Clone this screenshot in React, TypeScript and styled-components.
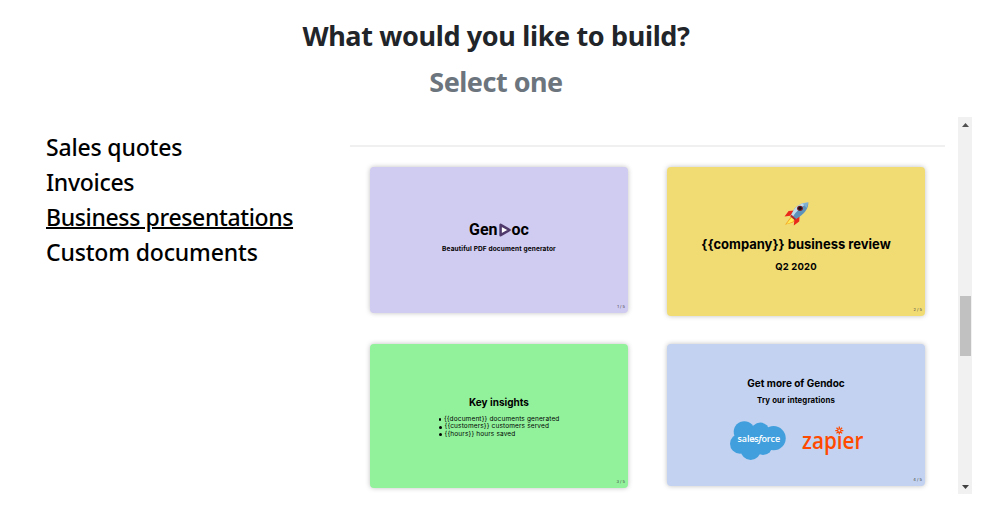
import React from 'react';
import styled, { createGlobalStyle } from 'styled-components';

const GlobalStyle = createGlobalStyle`
  * {
    box-sizing: border-box;
  }

  body {
    background: #fff;
    margin: 0;
    overflow: hidden;
  }
`;

const Page = styled.main`
  color: #212529;
  display: flex;
  flex-direction: column;
  font-family: 'Noto Sans', 'Open Sans', sans-serif;
  height: 515px;
  width: 1000px;
`;

const Header = styled.header`
  height: 117px;
  padding: 19px 8px 0 0;
  text-align: center;
`;

const Title = styled.h1<{ $muted?: boolean; $spacing: string }>`
  color: ${(props) => (props.$muted ? '#6c757d' : '#212529')};
  font-size: 27px;
  font-weight: 700;
  letter-spacing: ${(props) => props.$spacing};
  line-height: 34px;
  margin: 0 0 12px;
  white-space: nowrap;
`;

const Body = styled.div`
  display: flex;
  height: 377px;
`;

const Menu = styled.ul`
  list-style: none;
  margin: 0;
  padding: 13px 0 0 46px;
  width: 350px;
`;

const MenuItem = styled.li<{ $spacing: string }>`
  color: #000;
  font-size: 23px;
  font-weight: 500;
  height: 35px;
  letter-spacing: ${(props) => props.$spacing};
  line-height: 35px;
  white-space: nowrap;
`;

const MenuLabel = styled.span<{ $active: boolean }>`
  text-decoration: ${(props) => (props.$active ? 'underline' : 'none')};
  text-decoration-thickness: 2px;
  text-underline-offset: 1px;
`;

const Templates = styled.section`
  padding-top: 28px;
  width: 595px;
`;

const Divider = styled.hr`
  border: 0;
  border-top: 2px solid #f0f0f0;
  margin: 0 0 20px;
`;

const Slides = styled.div`
  align-items: start;
  display: grid;
  gap: 0 39px;
  grid-template-columns: 258px 258px;
  grid-template-rows: 177px auto;
  padding-left: 20px;
`;

const Slide = styled.article<{ $color: string; $height: number }>`
  align-items: center;
  background: ${(props) => props.$color};
  border-radius: 4px;
  box-shadow: 0 0 5px rgba(0, 0, 0, 0.25);
  color: #000;
  display: flex;
  flex-direction: column;
  font-family: Inter, sans-serif;
  height: ${(props) => props.$height}px;
  position: relative;
  width: 258px;
`;

const SlideText = styled.p<{
  $size: number;
  $top: number;
  $spacing?: string;
}>`
  font-size: ${(props) => props.$size}px;
  font-weight: 700;
  letter-spacing: ${(props) => props.$spacing || 'normal'};
  line-height: 16px;
  margin: ${(props) => props.$top}px 0 0;
  white-space: nowrap;
`;

const PageNumber = styled.span`
  bottom: 4px;
  color: #444;
  font-size: 4px;
  line-height: 5px;
  position: absolute;
  right: 3px;
`;

const Brand = styled.div`
  align-items: center;
  display: flex;
  font-family: Roboto, sans-serif;
  font-size: 16px;
  font-weight: 700;
  line-height: 20px;
  margin-top: 53px;

  svg {
    display: block;
    flex: none;
    margin: 0 1px;
  }
`;

const Rocket = styled.svg`
  display: block;
  margin: 35px 0 0 1px;
`;

const Insights = styled.ul`
  font-size: 6.5px;
  letter-spacing: 0.14px;
  line-height: 7.7px;
  list-style: none;
  margin: 5.5px 0 0;
  padding: 0;
  width: 121px;

  li {
    align-items: center;
    display: flex;
    white-space: nowrap;
  }

  li::before {
    background: #000;
    border-radius: 50%;
    content: '';
    height: 3px;
    margin-right: 3px;
    width: 3px;
  }
`;

const Integrations = styled.div`
  display: flex;
  gap: 16px;
  margin: 13px 0 0 2px;

  svg {
    overflow: visible;
  }
`;

const ScrollBar = styled.div`
  align-items: center;
  background: #f1f1f1;
  display: flex;
  flex-direction: column;
  margin-left: 13px;
  padding: 6px 0 5px;
  width: 14px;

  svg {
    display: block;
  }

  svg:last-child {
    margin-top: auto;
  }
`;

const Thumb = styled.div`
  background: #c1c1c1;
  height: 60px;
  margin-top: 169px;
  width: 11px;
`;

const menu = [
  { label: 'Sales quotes', spacing: '-0.17px' },
  { label: 'Invoices', spacing: '-0.3px' },
  { label: 'Business presentations', spacing: '-0.36px', active: true },
  { label: 'Custom documents', spacing: '-0.16px' },
];

function PlayMark() {
  return (
    <svg width="12" height="14" viewBox="0 0 12 14">
      <path
        d="M1.6 1.8v10.4L10.6 7z"
        fill="#fff"
        stroke="#50396b"
        strokeWidth="2.5"
        strokeLinejoin="round"
      />
    </svg>
  );
}

function RocketIcon() {
  return (
    <Rocket width="25" height="24" viewBox="0 0 25 24">
      <path d="M7 14.5 1 22.8l8-2.4 2.5-3z" fill="#f6a623" />
      <path d="M7.5 15.5 2.5 22l6-2.2 2-2.6z" fill="#ffee58" />
      <path d="M10 8.4 4.6 9 .5 14.6l5.8-.8z" fill="#e8291c" />
      <path d="M15.6 14.2 15.2 19.4 9.8 23.6l.6-6z" fill="#e8291c" />
      <path
        d="M24.3.6C18.4.6 13.2 3.3 9.6 8.2L6.6 14l4.3 3.8 5-3.2C21 11 24.4 6.5 24.3.6z"
        fill="#5d93bb"
      />
      <path
        d="M24.3.6C18.4.6 13.2 3.3 9.6 8.2L6.6 14l1.7 1.5C12 9.5 17.5 4.5 24.3.6z"
        fill="#c3dceb"
      />
      <path d="M24.3.6 18.5 1.6l4.3 4.3z" fill="#7fb0cf" />
      <ellipse cx="16" cy="6.3" rx="2.9" ry="2.6" fill="#7b1d22" />
      <circle cx="16" cy="6.3" r="1.7" fill="#16121c" />
      <path d="M7.5 12.8l4.6 4.2-1.4 1.2-4.5-4z" fill="#b3262a" />
    </Rocket>
  );
}

function SalesforceLogo() {
  return (
    <svg width="56" height="40" viewBox="0 0 56 40">
      <g fill="#419fdd">
        <circle cx="14.3" cy="10.8" r="10.6" />
        <circle cx="30.3" cy="10.8" r="9.2" />
        <circle cx="43.6" cy="17.2" r="12.1" />
        <circle cx="10" cy="22.7" r="10" />
        <circle cx="20.7" cy="29" r="10" />
        <circle cx="33" cy="24.5" r="9.5" />
      </g>
      <text
        x="7.6"
        y="21"
        fill="#fff"
        fontFamily="Open Sans, sans-serif"
        fontSize="9"
        fontWeight="600"
        textLength="42.5"
      >
        sales
        <tspan fontStyle="italic">f</tspan>
        orce
      </text>
    </svg>
  );
}

function ZapierLogo() {
  return (
    <svg width="63" height="40" viewBox="0 0 63 40">
      <text
        x="0"
        y="28"
        fill="#ff4a00"
        fontFamily="Open Sans, sans-serif"
        fontSize="23"
        fontWeight="600"
        textLength="61.5"
        lengthAdjust="spacingAndGlyphs"
      >
        zapier
      </text>
      {/* the asterisk takes the place of the dot */}
      <path d="M33 5h9v9h-9z" fill="#c2d2f0" />
      <path
        d="M37.3 5.6v8M33.3 9.6h8M34.5 6.8l5.6 5.6M40.1 6.8l-5.6 5.6"
        stroke="#ff4a00"
        strokeWidth="1.3"
      />
      <circle cx="37.3" cy="9.6" r="1.1" fill="#c2d2f0" />
    </svg>
  );
}

export default function App(): React.JSX.Element {
  return (
    <Page>
      <GlobalStyle />
      <Header>
        <Title $spacing="-0.35px">What would you like to build?</Title>
        <Title $muted $spacing="-0.5px">
          Select one
        </Title>
      </Header>
      <Body>
        <Menu>
          {menu.map((item) => (
            <MenuItem key={item.label} $spacing={item.spacing}>
              <MenuLabel $active={!!item.active}>{item.label}</MenuLabel>
            </MenuItem>
          ))}
        </Menu>
        <Templates>
          <Divider />
          <Slides>
            <Slide $color="#d0cbf0" $height={146}>
              <Brand>
                Gen
                <PlayMark />
                oc
              </Brand>
              <SlideText $size={6.5} $top={1} $spacing="0.14px">
                Beautiful PDF document generator
              </SlideText>
              <PageNumber>1 / 5</PageNumber>
            </Slide>
            <Slide $color="#f1dc74" $height={149}>
              <RocketIcon />
              <SlideText $size={13} $top={10}>
                {'{{company}} business review'}
              </SlideText>
              <SlideText $size={9.5} $top={7} $spacing="0.15px">
                Q2 2020
              </SlideText>
              <PageNumber>2 / 5</PageNumber>
            </Slide>
            <Slide $color="#92f29c" $height={144}>
              <SlideText $size={10} $top={50}>
                Key insights
              </SlideText>
              <Insights>
                <li>{'{{document}} documents generated'}</li>
                <li>{'{{customers}} customers served'}</li>
                <li>{'{{hours}} hours saved'}</li>
              </Insights>
              <PageNumber>3 / 5</PageNumber>
            </Slide>
            <Slide $color="#c2d2f0" $height={142}>
              <SlideText $size={10} $top={31}>
                Get more of Gendoc
              </SlideText>
              <SlideText $size={7.8} $top={1} $spacing="0.14px">
                Try our integrations
              </SlideText>
              <Integrations>
                <SalesforceLogo />
                <ZapierLogo />
              </Integrations>
              <PageNumber>4 / 5</PageNumber>
            </Slide>
          </Slides>
        </Templates>
        <ScrollBar>
          <svg width="7" height="4" viewBox="0 0 7 4">
            <path d="M0 4h7L3.5 0z" fill="#505050" />
          </svg>
          <Thumb />
          <svg width="7" height="4" viewBox="0 0 7 4">
            <path d="M0 0h7L3.5 4z" fill="#404040" />
          </svg>
        </ScrollBar>
      </Body>
    </Page>
  );
}
